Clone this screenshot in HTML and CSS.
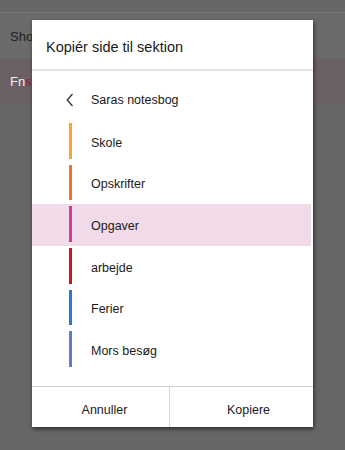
FILE: index.html
```html
<!DOCTYPE html>
<html lang="da">
<head>
    <meta charset="UTF-8">
    <meta name="viewport" content="width=device-width, initial-scale=1.0">
    <title>Kopiér side til sektion</title>
    <link rel="stylesheet" href="styles.css">
</head>
<body>
    <div class="page">
        <div class="page-top"></div>
        <div class="page-row">Shop</div>
        <div class="page-row page-row-active">Fn<span class="hl">sy</span></div>
    </div>

    <div class="dialog">
        <h2 class="dialog-title">Kopiér side til sektion</h2>
        <div class="dialog-body">
            <div class="notebook">
                <svg class="chevron" width="8" height="14" viewBox="0 0 8 14">
                    <path d="M6.5 1 L1.2 7 L6.5 13" fill="none" stroke="#333" stroke-width="1.3"/>
                </svg>
                <span>Saras notesbog</span>
            </div>
            <ul class="sections">
                <li class="section"><span class="bar" style="background:#f0a830"></span>Skole</li>
                <li class="section"><span class="bar" style="background:#ea7238"></span>Opskrifter</li>
                <li class="section selected"><span class="bar" style="background:#d9389a"></span>Opgaver</li>
                <li class="section"><span class="bar" style="background:#c8161f"></span>arbejde</li>
                <li class="section"><span class="bar" style="background:#2b79c2"></span>Ferier</li>
                <li class="section"><span class="bar" style="background:#5b80c6"></span>Mors besøg</li>
            </ul>
        </div>
        <div class="dialog-footer">
            <button class="btn btn-cancel">Annuller</button>
            <button class="btn btn-copy">Kopiere</button>
        </div>
    </div>
</body>
</html>
```

FILE: styles.css
```css
body {
    font-family: "Liberation Sans", Arial, sans-serif;
    background-color: #666;
    margin: 0;
    width: 345px;
    height: 450px;
    overflow: hidden;
    position: relative;
}
.page-top {
    height: 12px;
    border-bottom: 1px solid #737373;
}
.page-row {
    height: 46px;
    padding-left: 10px;
    display: flex;
    align-items: center;
    font-size: 13px;
    color: #1e1e1e;
    background: #6a6a6a;
}
.page-row-active {
    height: 44px;
    background: #6b6064;
    color: #eee;
}
.hl {
    color: #7a2446;
}
.dialog {
    position: absolute;
    left: 32px;
    top: 20px;
    width: 281px;
    height: 407px;
    background: white;
    box-shadow: 1px 2px 4px rgba(0,0,0,0.55);
    display: flex;
    flex-direction: column;
}
.dialog-title {
    margin: 0;
    height: 44px;
    padding: 5px 14px 0;
    display: flex;
    align-items: center;
    font-size: 14.5px;
    font-weight: normal;
    color: #1a1a1a;
    border-bottom: 2px solid #e2e2e2;
}
.dialog-body {
    flex: 1;
}
.notebook {
    height: 42px;
    display: flex;
    align-items: center;
    padding: 8px 0 0 34px;
    font-size: 12.5px;
    color: #1a1a1a;
}
.chevron {
    margin-right: 17px;
}
.sections {
    list-style: none;
    margin: 0;
    padding: 0;
}
.section {
    height: 41.67px;
    display: flex;
    align-items: center;
    font-size: 12.5px;
    color: #1a1a1a;
    padding-top: 2px;
    box-sizing: border-box;
}
.section.selected {
    background: #f2dbe8;
    margin-right: 2px;
}
.bar {
    align-self: stretch;
    width: 3px;
    margin: 0 19px 4px 37px;
}
.dialog-footer {
    height: 40px;
    display: flex;
    border-top: 1px solid #cfcfcf;
}
.btn {
    flex: 1;
    background: white;
    border: none;
    font-family: inherit;
    font-size: 12.5px;
    color: #1a1a1a;
    padding-top: 6px;
    cursor: pointer;
}
.btn-cancel {
    border-right: 1px solid #d6d6d6;
    padding-left: 14px;
}
.btn-copy {
    padding-left: 20px;
}
```
